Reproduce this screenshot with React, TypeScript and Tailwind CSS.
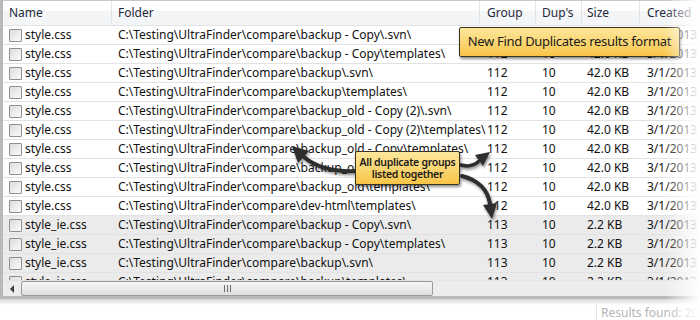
import React from 'react';

const BASE = 'C:\\Testing\\UltraFinder\\compare\\';

const rows = [
  { name: 'style.css', folder: 'backup - Copy\\.svn\\', group: 112, size: '42.0 KB' },
  { name: 'style.css', folder: 'backup - Copy\\templates\\', group: 112, size: '42.0 KB' },
  { name: 'style.css', folder: 'backup\\.svn\\', group: 112, size: '42.0 KB' },
  { name: 'style.css', folder: 'backup\\templates\\', group: 112, size: '42.0 KB' },
  { name: 'style.css', folder: 'backup_old - Copy (2)\\.svn\\', group: 112, size: '42.0 KB' },
  { name: 'style.css', folder: 'backup_old - Copy (2)\\templates\\', group: 112, size: '42.0 KB' },
  { name: 'style.css', folder: 'backup_old - Copy\\templates\\', group: 112, size: '42.0 KB' },
  { name: 'style.css', folder: 'backup_old\\.svn\\', group: 112, size: '42.0 KB' },
  { name: 'style.css', folder: 'backup_old\\templates\\', group: 112, size: '42.0 KB' },
  { name: 'style.css', folder: 'dev-html\\templates\\', group: 112, size: '42.0 KB' },
  { name: 'style_ie.css', folder: 'backup - Copy\\.svn\\', group: 113, size: '2.2 KB' },
  { name: 'style_ie.css', folder: 'backup - Copy\\templates\\', group: 113, size: '2.2 KB' },
  { name: 'style_ie.css', folder: 'backup\\.svn\\', group: 113, size: '2.2 KB' },
  { name: 'style_ie.css', folder: 'backup\\templates\\', group: 113, size: '2.2 KB' },
];

const Checkbox = () => (
  <span className="w-[13px] h-[13px] shrink-0 border border-[#8e8f8f] rounded-[1px] bg-gradient-to-br from-[#dcdcdc] to-[#fbfbfb]" />
);

const Header = () => (
  <div className="flex h-[26px] border-t border-b border-t-[#c9c9c9] border-b-[#e3e3e3] bg-gradient-to-b from-white from-40% to-[#f4f5f7] to-40% text-[#1e2a3b]">
    <div className="w-[109px] pl-[6px] flex items-center border-r border-[#e0e3e8]">Name</div>
    <div className="w-[368px] pl-[6px] flex items-center border-r border-[#e0e3e8]">Folder</div>
    <div className="w-[56px] pl-[7px] flex items-center border-r border-[#e0e3e8]">Group</div>
    <div className="w-[46px] pl-[6px] flex items-center border-r border-[#e0e3e8]">Dup's</div>
    <div className="w-[58px] pl-[5px] flex items-center border-r border-[#e0e3e8]">Size</div>
    <div className="flex-1 pl-[7px] flex items-center">Created</div>
  </div>
);

const Row = ({ r }: { r: (typeof rows)[number] }) => (
  <div
    className={
      'flex h-[19px] border-b border-[#e2e2e2] text-[#111] ' +
      (r.group === 113 ? 'bg-[#ebebeb]' : 'bg-white')
    }
  >
    <div className="w-[109px] pl-[6px] flex items-center gap-[3px]">
      <Checkbox />
      <span>{r.name}</span>
    </div>
    <div className="w-[368px] pl-[6px] flex items-center whitespace-nowrap">{BASE + r.folder}</div>
    <div className="w-[56px] pl-[7px] flex items-center">{r.group}</div>
    <div className="w-[46px] pl-[6px] flex items-center">10</div>
    <div className="w-[58px] pl-[5px] flex items-center whitespace-nowrap">{r.size}</div>
    <div className="flex-1 pl-[7px] flex items-center">3/1/2013</div>
  </div>
);

const Scrollbar = () => (
  <div className="flex h-[16px] bg-[#ececec] border-t border-[#e4e4e4]">
    <div className="w-[18px] flex items-center justify-center">
      <span className="w-0 h-0 border-y-[4px] border-y-transparent border-r-[4px] border-r-[#3c3c3c]" />
    </div>
    <div className="w-[412px] rounded-[2px] border border-[#9a9a9a] bg-gradient-to-b from-[#f7f7f7] to-[#dedede] flex items-center justify-center">
      <div className="flex gap-[2px]">
        <span className="w-[1px] h-[7px] bg-[#6b6b6b]" />
        <span className="w-[1px] h-[7px] bg-[#6b6b6b]" />
        <span className="w-[1px] h-[7px] bg-[#6b6b6b]" />
      </div>
    </div>
  </div>
);

const Arrows = () => (
  <svg
    className="absolute left-0 top-0 pointer-events-none drop-shadow-[1px_2px_1.5px_rgba(0,0,0,0.45)]"
    width="700"
    height="320"
  >
    <g fill="none" stroke="#2e2e2e" strokeWidth="4" strokeLinecap="round">
      <path d="M357 171 C 336 172, 318 169, 304 157" />
      <path d="M461 165 Q 472 168 479 161" strokeWidth="3.5" />
      <path d="M462 176 C 478 180, 488 190, 490 204" />
    </g>
    <g fill="#2e2e2e">
      <polygon points="292,146 309,151 298,163" />
      <polygon points="490,152 483,166 475,155" />
      <polygon points="492,219 497,203 483,205" />
    </g>
  </svg>
);

export default function App() {
  return (
    <div
      className="relative w-[700px] h-[320px] overflow-hidden bg-white text-[12px]"
      style={{ fontFamily: '"Noto Sans", "Open Sans", sans-serif' }}
    >
      <div className="flex flex-col border-l-[3px] border-b-[3px] border-[#b9b9b9] w-[700px]">
        <Header />
        <div className="h-[254px] overflow-hidden">
          {rows.map((r, i) => (
            <Row key={i} r={r} />
          ))}
        </div>
        <Scrollbar />
      </div>
      <div className="h-[6px] bg-gradient-to-b from-[#d6d6d6] to-white" />
      <div className="flex justify-end">
        <div className="w-[104px] h-[16px] border-l border-[#e2e2e2] pl-[4px] text-[#b4b4b4] leading-[16px] whitespace-nowrap">
          Results found: 2034
        </div>
      </div>

      <Arrows />

      <div className="absolute left-[459px] top-[27px] w-[221px] h-[30px] border border-[#3b3320] rounded-[2px] bg-gradient-to-b from-[#fde79a] to-[#f8c545] shadow-[1px_2px_3px_rgba(0,0,0,0.45)] flex items-center justify-center whitespace-nowrap text-[13px] tracking-[-0.3px] text-[#1a1a1a]">
        New Find Duplicates results format
      </div>

      <div className="absolute left-[355px] top-[151px] w-[105px] h-[34px] border border-[#3b3320] rounded-[2px] bg-gradient-to-b from-[#fde79a] to-[#f8c545] shadow-[1px_2px_3px_rgba(0,0,0,0.45)] flex flex-col items-center justify-center whitespace-nowrap text-[10.5px] tracking-[-0.3px] font-semibold leading-[12px] text-[#1a1a1a]">
        <span>All duplicate groups</span>
        <span>listed together</span>
      </div>

      <div className="absolute right-0 top-0 w-[36px] h-[320px] bg-gradient-to-r from-white/0 to-white pointer-events-none" />
    </div>
  );
}
